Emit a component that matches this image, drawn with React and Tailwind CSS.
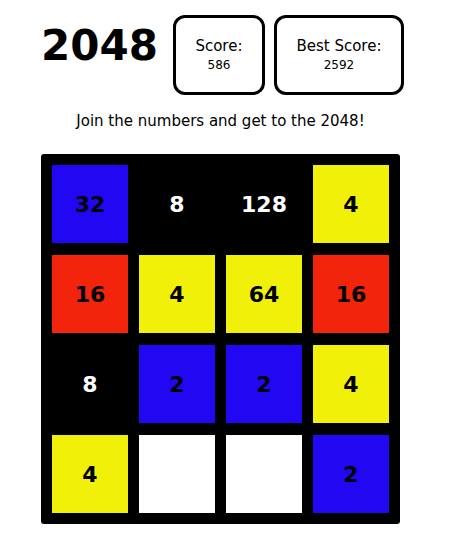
import React from "react";

const tiles = [
  [32, 8, 128, 4],
  [16, 4, 64, 16],
  [8, 2, 2, 4],
  [4, 0, 0, 2],
];

const color = (v) => {
  if (v === 0) return "bg-white";
  if (v === 2 || v === 32) return "bg-[#2208f2] text-black";
  if (v === 4 || v === 64) return "bg-[#f0f008] text-black";
  if (v === 16) return "bg-[#f2240c] text-black";
  return "bg-black text-white";
};

export default function App() {
  return (
    <div className="w-[441px] bg-white pt-[15px] text-black" style={{ fontFamily: '"DejaVu Sans", Verdana, sans-serif' }}>
      <div className="flex items-center justify-center gap-[15px] pl-[4px]">
        <div className="text-[42px] font-bold leading-none mt-[-18px]">2048</div>
        <div className="flex gap-[9px]">
          <div className="w-[92px] h-[80px] rounded-[12px] border-[3px] border-black flex flex-col items-center justify-center">
            <div className="text-[15px] leading-[20px]">Score:</div>
            <div className="text-[12px] leading-[18px]">586</div>
          </div>
          <div className="w-[130px] h-[80px] rounded-[12px] border-[3px] border-black flex flex-col items-center justify-center">
            <div className="text-[15px] leading-[20px]">Best Score:</div>
            <div className="text-[12px] leading-[18px]">2592</div>
          </div>
        </div>
      </div>
      <div className="text-center text-[15px] leading-[18px] mt-[17px]">Join the numbers and get to the 2048!</div>
      <div className="flex justify-center mt-[24px]">
        <div className="w-[359px] bg-black rounded-[3px] p-[11px] grid grid-cols-4 gap-x-[11px] gap-y-[12px]">
          {tiles.flat().map((v, i) => (
            <div key={i} className={`h-[78px] flex items-center justify-center text-[22px] font-bold ${color(v)}`}>
              {v ? v : ""}
            </div>
          ))}
        </div>
      </div>
    </div>
  );
}
